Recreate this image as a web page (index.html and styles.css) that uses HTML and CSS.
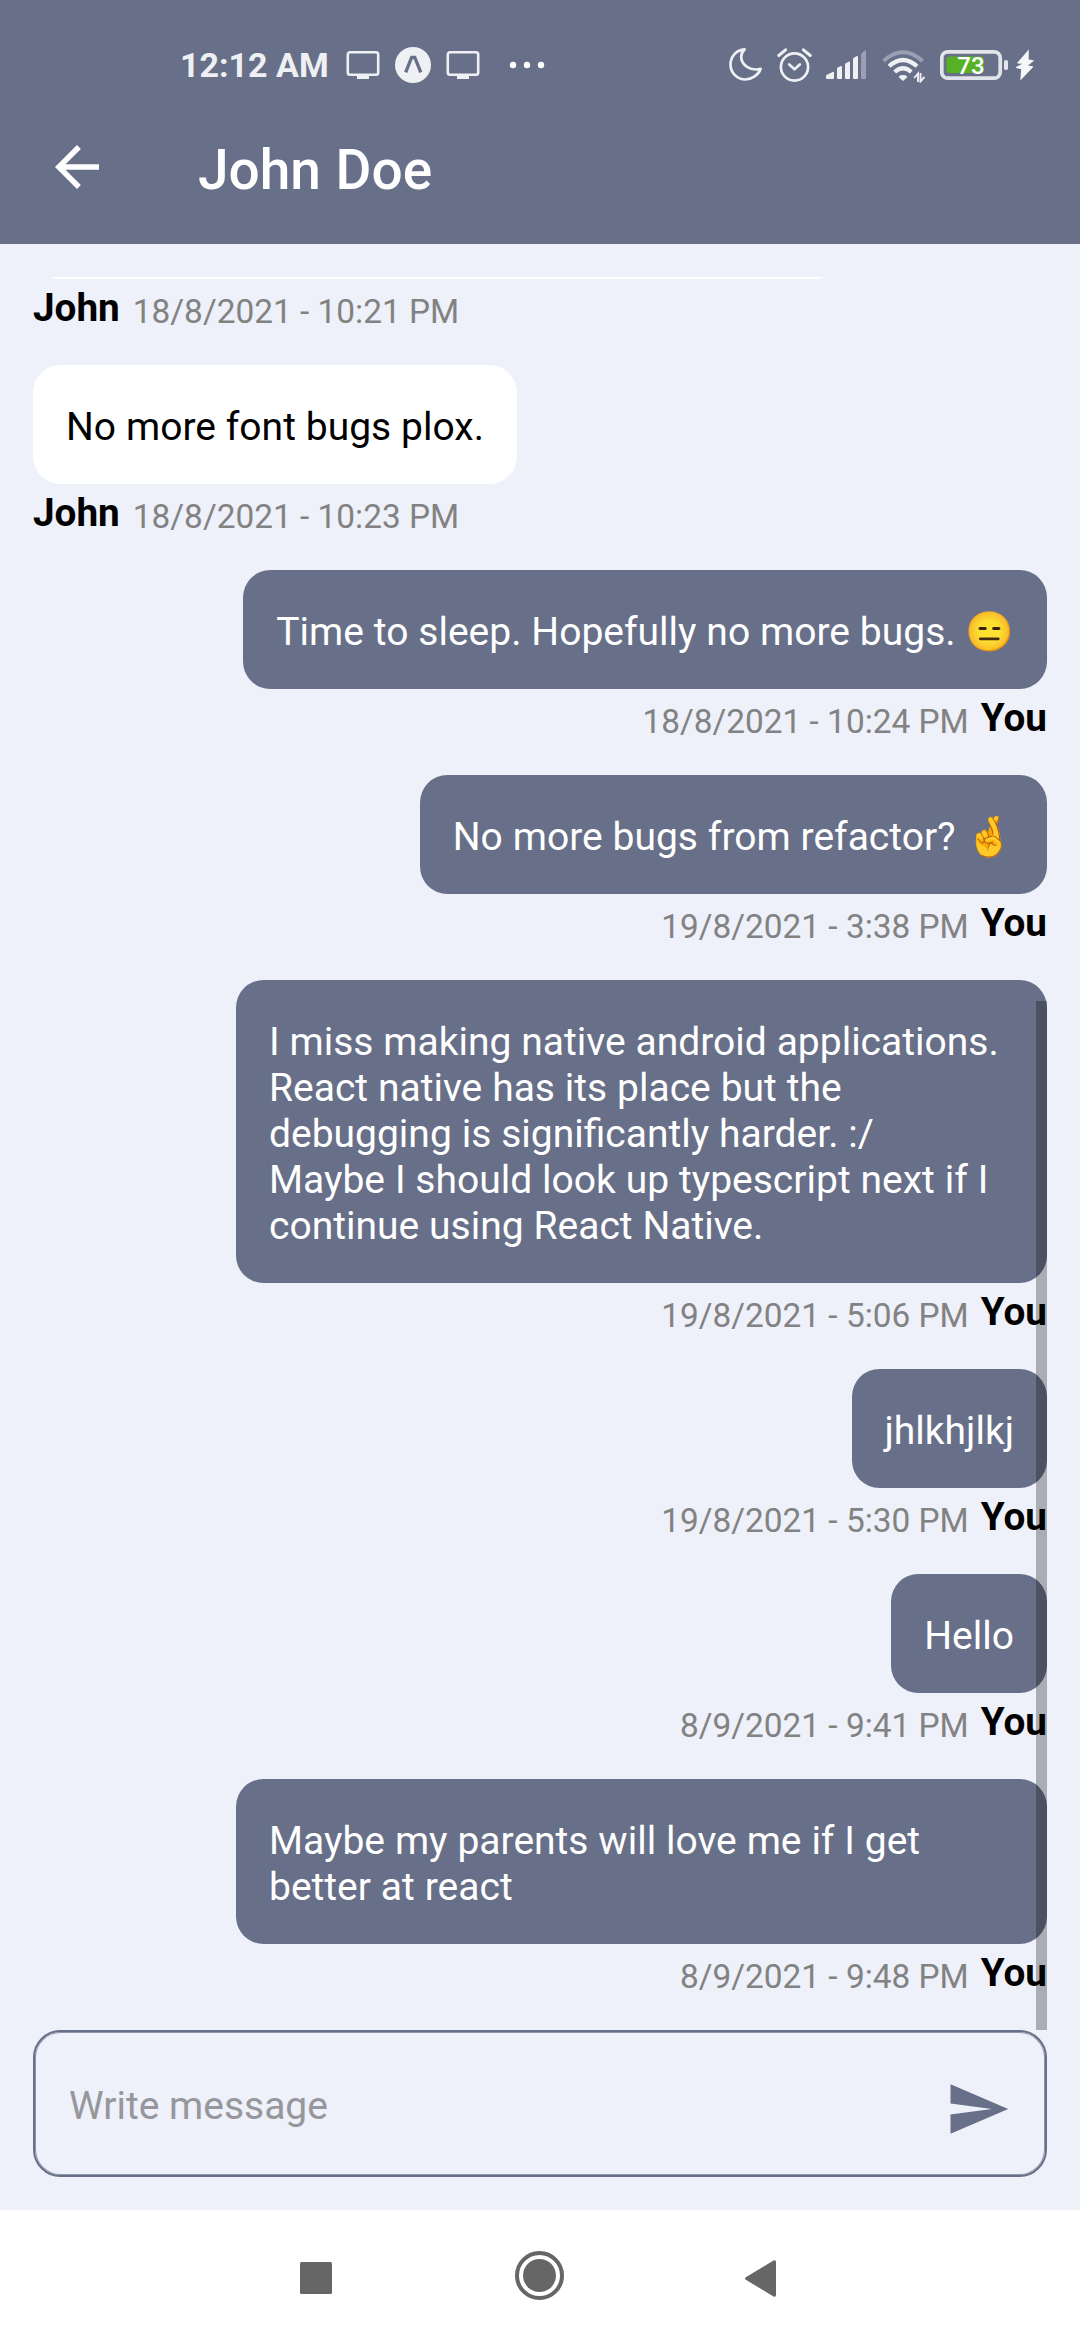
FILE: index.html
```
<!DOCTYPE html>
<html lang="en">
<head>
<meta charset="utf-8">
<title>John Doe</title>
<link rel="stylesheet" href="styles.css">
</head>
<body>
<div class="screen">
  <header class="top">
    <div class="status">
      <span class="time">12:12 AM</span>
      <svg class="monitor" width="34" height="30" viewBox="0 0 34 30"><rect x="1.8" y="2.3" width="30.4" height="22.4" rx="2.2" fill="none" stroke="#eff0f4" stroke-width="2.6"/><rect x="11" y="24.5" width="12" height="4.5" fill="#eff0f4"/></svg>
      <svg class="expo" width="36" height="36" viewBox="0 0 36 36"><circle cx="18" cy="18" r="18" fill="#eff0f4"/><path d="M10.7 25.3L16.6 10.5h3.2l6 14.8" fill="none" stroke="#686f88" stroke-width="3.3"/></svg>
      <svg class="monitor" width="34" height="30" viewBox="0 0 34 30"><rect x="1.8" y="2.3" width="30.4" height="22.4" rx="2.2" fill="none" stroke="#eff0f4" stroke-width="2.6"/><rect x="11" y="24.5" width="12" height="4.5" fill="#eff0f4"/></svg>
      <svg class="dots" width="36" height="8" viewBox="0 0 36 8"><circle cx="4" cy="4" r="3.2" fill="#fff"/><circle cx="18" cy="4" r="3.2" fill="#fff"/><circle cx="32" cy="4" r="3.2" fill="#fff"/></svg>
      <div class="indicators">
        <svg width="34" height="36" viewBox="0 0 34 36"><path d="M15.6 2.4C7.500 3 1.500 9.500 1.500 17.500C1.500 25.800 8.300 32.500 16.300 32.500C23 32.500 29.500 28 31.700 21.800C22.500 24.500 12 18.500 12.200 9.500C12.300 6.500 13.500 4.200 15.600 2.400Z" fill="none" stroke="#eff0f4" stroke-width="2.7" stroke-linejoin="round"/></svg>
        <svg class="alarm" width="36" height="36" viewBox="0 0 36 36"><g fill="none" stroke="#eff0f4" stroke-linecap="round"><circle cx="18.500" cy="20" r="13.600" stroke-width="2.700"/><path d="M13.200 17.500l5.300 4.800 5.300-4.800" stroke-width="2.700" stroke-linejoin="round"/><path d="M2.800 8.500L9.600 2.800M27.400 2.800l6.800 5.700" stroke-width="3"/></g></svg>
        <svg class="signal" width="40" height="36" viewBox="0 0 40 36"><g fill="#eff0f4"><path d="M0 31v-1.800q0-1 1-1.400L6.600 25q1.400-.5 1.400.8V31q0 1-1 1H1q-1 0-1-1z"/><path d="M11 21.800q0-.8.800-1.200l2.600-1.400q1.600-.6 1.600.8V31q0 1-1 1h-3q-1 0-1-1z"/><path d="M19 17.600q0-.8.800-1.300l2.600-1.500q1.600-.7 1.600.8V31q0 1-1 1h-3q-1 0-1-1z"/><path d="M27 12q0-.8.800-1.300l2.600-1.500q1.600-.7 1.600.8v21q0 1-1 1h-3q-1 0-1-1z"/></g><path d="M35 8q0-1 .8-1.800l2.700-2.600q1.500-1 1.500.6V31q0 1-1 1h-3q-1 0-1-1z" fill="#9a9fb1"/></svg>
        <svg class="wifi" width="43" height="36" viewBox="0 0 43 36"><g fill="none"><path d="M1.500 14Q21 -3.500 40.500 14" stroke="#9a9fb1" stroke-width="4"/><g stroke="#eff0f4" stroke-width="4.200"><path d="M7 19.300Q21 6.800 35 19.300"/><path d="M12.700 25Q21 17.500 29.300 25"/></g></g><path d="M21 33.900l-4-3.400q-.8-2.500 4-2.500t4 2.500z" fill="#eff0f4"/><path d="M36 35V26.500L32.200 31M38.500 26v8.500l4-4.500" fill="none" stroke="#eff0f4" stroke-width="1.900"/></svg>
        <svg class="battery" width="69" height="36" viewBox="0 0 69 36"><rect x="6.500" y="9.500" width="37" height="16.500" rx="3" fill="#57b125"/><rect x="1.800" y="4.800" width="58.400" height="26.400" rx="6" fill="none" stroke="#e2e4ec" stroke-width="3.700"/><rect x="64" y="13" width="4" height="10" rx="1.800" fill="#e2e4ec"/><text x="31" y="26.500" text-anchor="middle" class="battery-level">73</text></svg>
        <svg class="bolt" width="18" height="36" viewBox="0 0 18 36"><path d="M12.800 2.500L1.500 15.500q-.6.800.4.900l4.400.3L0 20q-.6.500.2.900l5 1.300L4.300 33.500 17 20.200q.7-.8-.3-1l-4.700-.6 5.600-4.500q.7-.6-.2-.8l-4.700-.8z" fill="#f6f7fa"/></svg>
      </div>
    </div>
    <div class="bar">
      <svg width="66" height="66" viewBox="0 0 24 24"><path d="M20 11H7.830l5.590-5.590L12 4l-8 8 8 8 1.410-1.410L7.830 13H20v-2z" fill="#fff"/></svg>
      <h1>John Doe</h1>
    </div>
  </header>

  <main class="chat">
    <div class="list">
      <div class="msg theirs"><p class="bubble wide">&nbsp;</p><div class="meta"><b>John</b><time>18/8/2021 - 10:21 PM</time></div></div>
      <div class="msg theirs"><p class="bubble">No more font bugs plox.</p><div class="meta"><b>John</b><time>18/8/2021 - 10:23 PM</time></div></div>
      <div class="msg mine"><p class="bubble">Time to sleep. Hopefully no more bugs. 😑</p><div class="meta"><time>18/8/2021 - 10:24 PM</time><b>You</b></div></div>
      <div class="msg mine"><p class="bubble">No more bugs from refactor? 🤞</p><div class="meta"><time>19/8/2021 - 3:38 PM</time><b>You</b></div></div>
      <div class="msg mine"><p class="bubble wide">I miss making native android applications.<br>React native has its place but the<br>debugging is significantly harder. :/<br>Maybe I should look up typescript next if I<br>continue using React Native.</p><div class="meta"><time>19/8/2021 - 5:06 PM</time><b>You</b></div></div>
      <div class="msg mine"><p class="bubble">jhlkhjlkj</p><div class="meta"><time>19/8/2021 - 5:30 PM</time><b>You</b></div></div>
      <div class="msg mine"><p class="bubble">Hello</p><div class="meta"><time>8/9/2021 - 9:41 PM</time><b>You</b></div></div>
      <div class="msg mine"><p class="bubble wide">Maybe my parents will love me if I get<br>better at react</p><div class="meta"><time>8/9/2021 - 9:48 PM</time><b>You</b></div></div>
      <div class="scrollbar"></div>
    </div>
    <div class="composer">
      <span>Write message</span>
      <svg width="66" height="66" viewBox="0 0 24 24"><path d="M2.010 21L23 12 2.010 3 2 10l15 2-15 2z" fill="#686f88"/></svg>
    </div>
  </main>

  <nav class="nav">
    <svg width="32" height="32" viewBox="0 0 32 32"><rect width="32" height="32" rx="1.500" fill="#666"/></svg>
    <svg class="home" width="49" height="49" viewBox="0 0 49 49"><circle cx="24.500" cy="24.500" r="22.500" fill="none" stroke="#666" stroke-width="4"/><circle cx="24.500" cy="24.500" r="16.500" fill="#666"/></svg>
    <svg class="back" width="31" height="37" viewBox="0 0 31 37"><path d="M.8 17.200L28.500.6Q31-.4 31 2v33q0 2.400-2.500 1.400L.8 19.800q-1.500-1.300 0-2.600z" fill="#666"/></svg>
  </nav>
</div>
</body>
</html>
```
FILE: styles.css
```
* { box-sizing: border-box; margin: 0; padding: 0; }
body {
  width: 1080px;
  height: 2340px;
  overflow: hidden;
  font-family: Roboto, "Noto Color Emoji", sans-serif;
  background: #fff;
}
svg { display: block; flex: none; }
.screen { display: flex; flex-direction: column; width: 1080px; height: 2340px; }

.top { height: 244px; background: #686f88; }
.status { display: flex; align-items: center; height: 90px; padding: 40px 46px 0 180px; }
.time { width: 166px; font-size: 34px; line-height: 40px; font-weight: 700; color: #eff0f4; white-space: nowrap; }
.expo { margin: 0 15px; }
.dots { margin-left: 29px; }
.indicators { display: flex; margin-left: auto; }
.alarm { margin-left: 13px; }
.signal { margin-left: 14px; }
.wifi { margin-left: 16px; }
.battery { margin-left: 15px; }
.bolt { margin-left: 7px; }
.battery-level { font-size: 24px; font-weight: 500; fill: #fff; }
.bar { display: flex; align-items: center; height: 154px; padding-left: 44px; }
.bar h1 { margin: 6px 0 0 88px; font-size: 55px; line-height: 64px; font-weight: 500; word-spacing: 1px; color: #fff; }

.chat { display: flex; flex-direction: column; height: 1966px; padding: 33px; background: #eef0fa; }
.list {
  position: relative;
  display: flex;
  flex-direction: column;
  justify-content: flex-end;
  height: 1753px;
  overflow: hidden;
}
.msg { display: flex; flex-direction: column; align-items: flex-start; }
.mine { align-items: flex-end; }
.bubble {
  padding: 39px 33px 34px;
  border-radius: 27.5px;
  font-size: 39px;
  line-height: 46px;
  word-spacing: .2px;
  background: #fff;
  color: #000;
  white-space: nowrap;
}
.mine .bubble { background: #686f88; color: #fff; }
.wide { width: 811px; }
.meta { display: flex; align-items: flex-start; gap: 12px; height: 86px; padding-top: 6px; }
.theirs .meta { gap: 13px; }
.meta b { font-size: 38.7px; line-height: 46px; color: #000; }
.meta time { margin-top: 8px; font-size: 33.4px; line-height: 38px; color: #828282; }
.scrollbar { position: absolute; right: 0; bottom: 0; width: 11px; height: 1029px; background: rgba(0, 0, 0, .28); }

.composer {
  display: flex;
  align-items: center;
  justify-content: space-between;
  height: 147px;
  padding: 2px 34px 0;
  border: 2px solid #686f88;
  border-radius: 27.5px;
  box-shadow: inset 0 0 0 1px rgba(104, 111, 136, .7);
}
.composer span { margin-top: 2px; font-size: 39px; line-height: 46px; color: #96979b; }
.composer svg { margin-top: 8px; }

.nav { display: flex; height: 130px; padding: 52px 0 0 300px; background: #fff; }
.home { margin: -11px 0 0 183px; }
.back { margin: -2px 0 0 181px; }
```
